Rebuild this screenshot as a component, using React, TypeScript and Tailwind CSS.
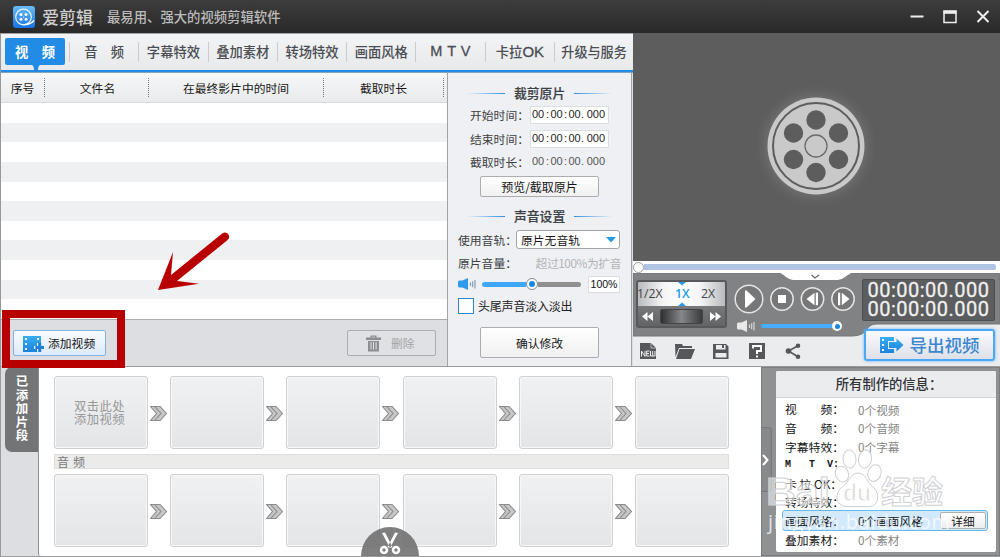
import React from "react";

const tabs: [string, string][] = [
  ["音　频", "text-[13.300px]"],
  ["字幕特效", "text-[13.300px]"],
  ["叠加素材", "text-[13.300px]"],
  ["转场特效", "text-[13.300px]"],
  ["画面风格", "text-[13.300px]"],
  ["M T V", "font-['Liberation_Sans',sans-serif] text-[14.500px] tracking-[0.500px] [-webkit-text-stroke:0.3px_#4a4d52]"],
  ["卡拉OK", "text-[13.300px]"],
  ["升级与服务", "text-[13.100px]"],
];

function FilmIcon({ arrow = false, className = "" }: { arrow?: boolean; className?: string }) {
  return (
    <svg viewBox="0 0 24 16" className={className}>
      <defs>
        <linearGradient id="film" x1="0" y1="0" x2="0" y2="1">
          <stop offset="0" stopColor="#39adf0" />
          <stop offset="1" stopColor="#1d83dd" />
        </linearGradient>
      </defs>
      {arrow ? (
        <>
          <path d="M0 0H14V4H8V12H14V16H0Z" fill="url(#film)" />
          <path d="M9 5H16.500V1.500L23.500 8L16.500 14.500V11H9Z" fill="url(#film)" />
          <path d="M2 2h2v2H2zM2 7h2v2H2zM2 12h2v2H2z" fill="#e8f4ff" />
        </>
      ) : (
        <>
          <path d="M0 0H18V7H14V10H11V13H14V16H0Z" fill="url(#film)" />
          <path d="M15.200 7H18.200V10H21V13H18.200V16H15.200V13H12.400V10H15.200Z" fill="#1d7fd8" />
          <path d="M2 2h2v2H2zM2 7h2v2H2zM2 12h2v2H2zM14 2h2v2h-2z" fill="#e8f4ff" />
        </>
      )}
    </svg>
  );
}

function Speaker({ white = false, className = "" }: { white?: boolean; className?: string }) {
  const c = white ? "#e8e8e8" : "#2f9bea";
  const w = white ? "#d8d8d8" : "#7f9fb5";
  return (
    <svg viewBox="0 0 18 12" className={className}>
      <path d="M0 4Q0 2.500 1.500 2.500H4.500L10 0V12L4.500 9.500H1.500Q0 9.500 0 8Z" fill={c} />
      <path d="M12.500 4.500V8M14.700 3.300V9.200M17 2V10.500" stroke={w} strokeWidth="1.200" fill="none" />
    </svg>
  );
}

function SectionTitle({ children }: { children: React.ReactNode }) {
  return (
    <div className="flex h-4 items-center justify-center gap-[9px]">
      <div className="h-px w-[38px] bg-linear-to-r from-transparent to-[#2f8fe4]" />
      <div className="w-[51px] whitespace-nowrap text-[12.800px] leading-4 font-medium text-[#3e4247] [-webkit-text-stroke:0.2px_#3e4247]">{children}</div>
      <div className="h-px w-[38px] bg-linear-to-l from-transparent to-[#2f8fe4]" />
    </div>
  );
}

function TimeValue() {
  return (
    <span className="flex font-['Liberation_Sans',sans-serif] text-[11px] leading-none">
      <span className="w-[13px]">00</span>
      <span className="w-[5px] text-center">:</span>
      <span className="w-[13px] text-center">00</span>
      <span className="w-[5px] text-center">:</span>
      <span className="w-[13px] text-center">00</span>
      <span className="w-[5px]">.</span>
      <span className="w-[19px] text-right">000</span>
    </span>
  );
}

function Chevron() {
  return (
    <svg viewBox="0 0 17 15" className="mt-[2px] mr-px h-[15px] w-[17px]">
      <path d="M.5.500H10L16.500 7.500L10 14.500H.5L6.500 7.500Z" fill="#c6c6c6" />
      <path d="M.5.500H10L16.500 7.500L10 14.500H.5L6.500 7.500ZM5 1L11 7.500L5 14" fill="none" stroke="#8b8b8b" strokeWidth="1.100" />
    </svg>
  );
}

function ClipRow({ first = false }: { first?: boolean }) {
  return (
    <div className="flex h-[73px]">
      {[0, 1, 2, 3, 4, 5].map((i) => (
        <React.Fragment key={i}>
          <div className="flex w-[94px] shrink-0 items-center justify-center rounded-[3px] border border-[#d0d0d1] bg-linear-to-b from-[#f0f1f2] to-[#e4e5e7] text-[12.300px] leading-[13px] tracking-[0.500px] text-[#979797] shadow-[inset_0_0_0_1px_#f8f8f8]">
            {first && i === 0 && <div className="-ml-[3px] whitespace-nowrap">双击此处<br />添加视频</div>}
          </div>
          {i < 5 && (
            <div className="flex w-[22.200px] shrink-0 items-center justify-center">
              <Chevron />
            </div>
          )}
        </React.Fragment>
      ))}
    </div>
  );
}

function TitleBar() {
  return (
    <header className="flex h-[33px] items-center bg-linear-to-b from-[#3d3d3d] to-[#292929]">
      <svg viewBox="0 0 22 22" className="ml-[13px] h-[22px] w-[22px]">
        <defs>
          <linearGradient id="logo" x1="0" y1="0" x2="0" y2="1">
            <stop offset="0" stopColor="#69bcf8" />
            <stop offset="1" stopColor="#1674e4" />
          </linearGradient>
        </defs>
        <rect width="22" height="22" rx="3" fill="url(#logo)" />
        <circle cx="10.500" cy="11" r="7.800" fill="none" stroke="#e8f5ff" strokeWidth="1.200" />
        <g fill="#fff">
          <circle cx="8" cy="8.500" r="1.500" />
          <circle cx="13" cy="8.500" r="1.500" />
          <circle cx="8" cy="13.300" r="1.500" />
          <circle cx="13" cy="13.300" r="1.500" />
          <circle cx="10.500" cy="11" r=".6" />
        </g>
        <path d="M10.500 18.700Q17 19 21 14.500" fill="none" stroke="#fff" strokeWidth="1.300" />
      </svg>
      <div className="ml-[7px] w-[65px] text-[17px] leading-none font-medium text-[#d0d0d0]">爱剪辑</div>
      <div className="w-[300px] text-[13.350px] leading-none font-medium text-[#bcbcbc]">最易用、强大的视频剪辑软件</div>
      <svg viewBox="0 0 90 20" className="ml-auto mr-1 h-5 w-[90px]" fill="none" stroke="#eee" strokeWidth="2">
        <path d="M4.500 9.500H17.500" />
        <path d="M38 4H50V15.500H38Z" strokeWidth="1.500" />
        <path d="M37.500 5.300H50.500" strokeWidth="3" />
        <path d="M71.500 4L82.500 15M82.500 4L71.500 15" />
      </svg>
    </header>
  );
}

function Tabs() {
  return (
    <nav className="flex h-[40px] shrink-0 flex-col border-t border-[#a0a2a4] bg-linear-to-b from-[#f3f4f6] to-[#e7e8ea]">
      <div className="flex h-[35px]">
        <div className="w-[68px] shrink-0 pl-1 pt-1">
          <div className="relative flex h-[27px] w-[60px] items-center justify-center rounded-[2px] bg-[#228be6] text-[13.300px] font-bold text-white">
            视　频
            <svg viewBox="0 0 8 5" className="absolute left-[26.500px] top-[27px] h-[5px] w-2"><path d="M0 0H8Q6 1 6 5H2Q2 1 0 0Z" fill="#228be6" /></svg>
          </div>
        </div>
        {tabs.map(([t, cls], i) => (
          <div key={t} className={"flex items-center whitespace-nowrap " + (i === 7 ? "flex-1" : "w-[69.300px] shrink-0")}>
            <div className="h-[20px] w-px bg-[#cacbcd]" />
            <div className={"flex-1 text-center font-medium text-[#4a4d52] " + cls}>
              {i === 6 ? <>卡拉<span className="font-['Liberation_Sans',sans-serif] text-[15px] [-webkit-text-stroke:0.3px_#4a4d52]">OK</span></> : t}
            </div>
          </div>
        ))}
      </div>
      <div className="mt-px h-[3px] border-b border-[#82a5c4] bg-[#228be6]" />
    </nav>
  );
}

function FileList() {
  return (
    <section className="flex w-[446px] shrink-0 flex-col">
      <div className="flex h-[30px] shrink-0 items-center border-b border-[#d9dadc] bg-linear-to-b from-[#f6f7f8] to-[#e9eaec] text-center text-[11.800px] text-[#171717]">
        <div className="w-[43px]">序号</div>
        <div className="h-[19px] border-l border-dotted border-[#777]" />
        <div className="w-[103px] pl-[2px]">文件名</div>
        <div className="h-[19px] border-l border-dotted border-[#777]" />
        <div className="w-[174px]">在最终影片中的时间</div>
        <div className="h-[19px] border-l border-dotted border-[#777]" />
        <div className="w-[119px]">截取时长</div>
        <div className="h-[19px] border-l border-dotted border-[#777]" />
      </div>
      <div className="flex min-h-0 flex-1 flex-col bg-white">
        {Array.from({ length: 11 }, (_, i) => (
          <div key={i} className={"flex-1 " + (i % 2 ? "bg-[#eff0f2]" : "bg-white")} />
        ))}
      </div>
      <div className="flex h-[47px] shrink-0 items-center justify-between border-t border-[#abacae] bg-[#dddee2] pl-3 pr-[11px]">
        <button className="flex h-[26px] w-[93px] items-center rounded-[2px] border border-[#82b3df] bg-linear-to-b from-[#f8fbff] to-[#ddeafa] pl-[9px] text-[11.800px] text-[#151515]">
          <FilmIcon className="mt-px h-4 w-6" />
          <span className="ml-px">添加视频</span>
        </button>
        <button className="flex h-[26px] w-[89px] items-center rounded-[2px] border border-[#abacae] bg-[#e0e1e4] pl-[18px] text-[11.800px] text-[#a3a4a6]">
          <svg viewBox="0 0 15 17" className="h-[17px] w-[15px]" fill="#8c8d8f">
            <path d="M0 2.500H4.500V.5H10.500V2.500H15V5H0ZM6 1.800V2.500H9V1.800ZM2 6H13V16.500H2ZM4.500 7V14.500H5.500V7ZM7 7V14.500H8V7ZM9.600 7V14.500H10.600V7Z" fillRule="evenodd" />
          </svg>
          <span className="ml-[10px]">删除</span>
        </button>
      </div>
    </section>
  );
}

const label = "w-[60px] shrink-0 whitespace-nowrap text-[11.800px] text-[#3d3f42]";

function Settings() {
  return (
    <section className="flex w-[185px] shrink-0 flex-col border-x border-[#a2a3a5] bg-[#eff0f3] pt-[12px] text-xs">
      <SectionTitle>裁剪原片</SectionTitle>
      <div className="mt-[4px] flex h-[19px] items-center pl-[22px]">
        <div className={label}>开始时间：</div>
        <div className="flex h-[18px] w-[79px] items-center border border-[#dcdde0] bg-white pl-px text-[#222]"><TimeValue /></div>
      </div>
      <div className="mt-[5px] flex h-[19px] items-center pl-[22px]">
        <div className={label}>结束时间：</div>
        <div className="flex h-[18px] w-[79px] items-center border border-[#dcdde0] bg-white pl-px text-[#222]"><TimeValue /></div>
      </div>
      <div className="mt-[4px] flex h-[19px] items-center pl-[22px]">
        <div className={label}>截取时长：</div>
        <div className="pl-[2px] text-[#555]"><TimeValue /></div>
      </div>
      <button className="mt-[5px] ml-[32px] h-[21px] w-[119px] rounded-[2px] border border-[#adadaf] bg-linear-to-b from-white to-[#f0f0f0] text-xs leading-[19px] text-[#151515]">预览/截取原片</button>
      <div className="mt-[11px]"><SectionTitle>声音设置</SectionTitle></div>
      <div className="mt-[6px] flex h-[19px] items-center pl-[10px]">
        <div className="w-[58px] shrink-0 whitespace-nowrap text-[11.800px] text-[#3d3f42]">使用音轨：</div>
        <div className="flex h-[19px] w-[104px] items-center justify-between rounded-[3px] border border-[#a3a4a6] bg-white pl-1 pr-[3px] text-[11.800px] text-[#151515]">
          原片无音轨
          <svg viewBox="0 0 10 6" className="h-[6px] w-[10px]"><path d="M0 0H10L5 5.500Z" fill="#229be9" /></svg>
        </div>
      </div>
      <div className="mt-[4px] flex h-[19px] items-center justify-between pl-[10px] pr-[10px]">
        <span className="text-[11.800px] text-[#3d3f42]">原片音量：</span>
        <span className="text-[11.800px] tracking-[-0.450px] text-[#b2b4b7]">超过100%为扩音</span>
      </div>
      <div className="mt-[3px] flex h-[18px] items-center pl-[10px]">
        <Speaker className="h-3 w-[18px]" />
        <div className="ml-[6px] flex w-[99px] items-center">
          <div className="h-[5px] w-[44px] rounded-l-full bg-[#3ea6fb]" />
          <div className="flex h-[12px] w-[12px] shrink-0 items-center justify-center rounded-full border border-[#888] bg-white"><div className="h-[6px] w-[6px] rounded-full bg-[#1687e2]" /></div>
          <div className="h-[5px] flex-1 rounded-r-full bg-[#909090]" />
        </div>
        <div className="ml-[7px] flex h-[17px] w-[32px] items-center justify-center border border-[#dcdde0] bg-white font-['Liberation_Sans',sans-serif] text-[10.500px] text-[#111]">100%</div>
      </div>
      <div className="mt-[5px] flex h-[16px] items-center pl-[10px] text-xs text-[#222]">
        <div className="h-[16px] w-[16px] border border-[#3487c4] bg-white" />
        <span className="ml-[4px] tracking-[-0.200px]">头尾声音淡入淡出</span>
      </div>
      <button className="mt-[13px] ml-[32px] h-[31px] w-[119px] rounded-[2px] border border-[#adadaf] bg-linear-to-b from-white to-[#f0f0f0] text-[11.800px] text-[#151515]">确认修改</button>
    </section>
  );
}

function Reel() {
  return (
    <svg viewBox="-70 -70 140 140" className="h-[140px] w-[140px]">
      <defs>
        <radialGradient id="glow">
          <stop offset=".65" stopColor="#999" stopOpacity=".6" />
          <stop offset="1" stopColor="#666" stopOpacity="0" />
        </radialGradient>
      </defs>
      <circle r="62" fill="url(#glow)" />
      <circle r="48.500" fill="#c9c9c9" />
      <circle r="43" fill="none" stroke="#5d5d5d" strokeWidth="2" />
      <circle r="11" fill="none" stroke="#6b6b6b" strokeWidth="1.300" />
      <g fill="#5d5d5d">
        <circle cy="-26" r="9.700" />
        <circle cy="26.500" r="9.700" />
        <circle cx="-22.500" cy="-13" r="9.700" />
        <circle cx="22.500" cy="-13" r="9.700" />
        <circle cx="-22.500" cy="13.500" r="9.700" />
        <circle cx="22.500" cy="13.500" r="9.700" />
      </g>
    </svg>
  );
}

function PlayButtons() {
  return (
    <svg viewBox="0 0 122 32" className="block h-[32px] w-[122px]">
      <g fill="#777" stroke="#e4e4e4" strokeWidth="1.500">
        <circle cx="15" cy="16" r="13.800" />
        <circle cx="48" cy="16" r="11.200" />
        <circle cx="78.500" cy="16" r="11.200" />
        <circle cx="109" cy="16" r="11.200" />
      </g>
      <g fill="#fff">
        <path d="M11 7.500H12.500L21.500 16L12.500 24.500H11Z" />
        <path d="M44 12H52V20H44Z" />
        <path d="M80.500 9.800V22.200L72.500 16ZM81.800 9.800H84V22.200H81.800ZM104 9.800H106.200V22.200H104ZM107.800 9.800L115.500 16L107.800 22.200Z" />
      </g>
    </svg>
  );
}

function ToolIcons() {
  return (
    <svg viewBox="0 0 162 18" className="block h-[18px] w-[162px]" fill="#55575a">
      <path d="M0 1H11L16 6V17H0Z" />
      <path d="M11 1V6H16" fill="none" stroke="#ddd" strokeWidth=".7" />
      <path d="M1.500 14.500V9L5 14.500V9M9.500 9H6.700V14H9.500M6.700 11.500H9M10.500 9V14H15V9M12.700 9V14" fill="none" stroke="#eee" strokeWidth="1" />
      <path d="M35 2H42L43 4H52V6H39L35.500 15Z" />
      <path d="M39.500 7H55L51 17H36Z" />
      <path d="M73 2H86L88.500 4.500V17H73ZM76 3V7.500H85.500V3ZM75.500 11V15.500H86.500V11ZM82 3H84V6H82Z" fillRule="evenodd" />
      <path d="M109 1H125V17H109Z" />
      <path d="M113 6.500V4H121V9H117V12" fill="none" stroke="#fff" strokeWidth="2" />
      <path d="M116 13.500h2v2h-2z" fill="#fff" />
      <circle cx="148.500" cy="9" r="2.800" />
      <circle cx="158" cy="3.800" r="2.300" />
      <circle cx="158" cy="14.700" r="2.300" />
      <path d="M158 3.800L148.500 9L158 14.700" fill="none" stroke="#55575a" strokeWidth="1.600" />
    </svg>
  );
}

function Player() {
  return (
    <section className="flex min-w-0 flex-1 flex-col bg-[#ebecee]">
      <div className="flex h-[228px] shrink-0 items-center justify-center bg-[#5d5d5d] pb-[2px] pr-px">
        <Reel />
      </div>
      <div className="flex h-[12px] shrink-0 items-center bg-white pr-1">
        <div className="h-[11px] w-[11px] rounded-full border border-[#999] bg-white" />
        <div className="h-[6px] flex-1 rounded-r-[2px] bg-[#afc3e5]" />
      </div>
      <div className="relative h-[93px]">
        <svg viewBox="0 0 367 64" className="absolute inset-0 h-16 w-[367px]">
          <path d="M0 0H367V51H244Q237 51 234 56Q230 63 219 63H0Z" fill="#818284" stroke="#737476" strokeWidth="1" />
          <path d="M144 -1H221Q217 0 212 4Q208 7 205 7H160Q157 7 153 4Q149 0 144 -1Z" fill="#fff" />
          <path d="M178.500 2L182 5L186 2" fill="none" stroke="#666" strokeWidth="1.200" />
        </svg>
        <div className="relative flex h-[62px]">
          <div className="ml-[3px] mt-[7px] h-[48px] w-[91px] shrink-0 overflow-hidden rounded-[3px] border-2 border-[#57595c] bg-[#6e7072]">
            <div className="relative flex h-[24px] items-center bg-[linear-gradient(to_right,#b9babd,#f4f4f6_28%,#fff_50%,#f4f4f6_72%,#b9babd)] font-['Open_Sans','Noto_Sans',sans-serif] text-[12.300px] text-[#444]">
              <span className="-ml-px w-[38px]">1/2X</span>
              <span className="w-[26px] font-semibold text-[#239be9]">1X</span>
              <span>2X</span>
              <svg viewBox="0 0 8 24" className="absolute left-[40px] top-0 h-6 w-2" fill="#239be9"><path d="M0 0H8L4 3.500ZM0 24H8L4 20.500Z" /></svg>
            </div>
            <div className="flex h-[20px] items-center justify-between bg-linear-to-b from-[#77797b] to-[#626466] px-1 pt-px">
              <svg viewBox="0 0 11 9" className="h-[9px] w-[11px]" fill="#fff"><path d="M5.500 0V9L0 4.500ZM11 0V9L5.500 4.500Z" /></svg>
              <div className="h-[15px] w-[43px] rounded-[2px] border border-[#444] bg-linear-to-r from-[#303133] via-[#86888b] to-[#3b3c3e]" />
              <svg viewBox="0 0 11 9" className="h-[9px] w-[11px]" fill="#fff"><path d="M0 0V9L5.500 4.500ZM5.500 0V9L11 4.500Z" /></svg>
            </div>
          </div>
          <div className="ml-[7px] w-[125px] shrink-0 pt-[10px]">
            <PlayButtons />
            <div className="mt-[4px] flex h-[14px] items-center pl-[3px]">
              <Speaker white className="h-[12px] w-[18px]" />
              <div className="ml-[6px] h-[4px] w-[71px] rounded-l-full bg-[#46adff]" />
              <div className="flex h-[10px] w-[10px] items-center justify-center rounded-full bg-white"><div className="h-[5px] w-[5px] rounded-full bg-[#1687e2]" /></div>
            </div>
          </div>
          <div className="ml-[3px] mt-[6px] flex h-[42px] w-[133px] flex-col items-center justify-center rounded-[2px] border border-[#4c4e4f] bg-[#5c5d5f] font-['Roboto','Liberation_Sans',sans-serif] text-[20px] leading-[19.500px] tracking-[0.500px] text-[#f0f0f0] [-webkit-text-stroke:0.3px_#f0f0f0]">
            <div>00:00:00.000</div>
            <div>00:00:00.000</div>
          </div>
        </div>
        <div className="relative flex items-center">
          <div className="ml-[7px] mt-[6px] w-[162px]"><ToolIcons /></div>
          <button className="-mt-[6px] ml-[62px] flex h-[32px] w-[131px] items-center justify-center gap-[6px] rounded-[3px] border-2 border-[#4aa8f6] bg-linear-to-b from-[#fafbff] to-[#dde0e8] text-[17.500px] font-medium text-[#3b86cf] shadow-[0_0_3px_#61b4ff]">
            <FilmIcon arrow className="h-4 w-6" />
            <span>导出视频</span>
          </button>
        </div>
      </div>
    </section>
  );
}

const info: [string, string][] = [
  ["视　　频：", "0个视频"],
  ["音　　频：", "0个音频"],
  ["字幕特效：", "0个字幕"],
  ["M   T  V:", ""],
  ["卡 拉 OK：", ""],
  ["转场特效：", ""],
  ["画面风格：", "0个画面风格"],
  ["叠加素材：", "0个素材"],
];

function Info() {
  return (
    <aside className="flex w-[239px] shrink-0 border border-[#7d7e80] bg-[#909193]">
      <div className="flex w-[14px] shrink-0 items-center pb-1">
        <div className="flex h-[65px] w-[10px] items-center rounded-r-[4px] border border-l-0 border-[#77787a] bg-[#88898b]">
          <svg viewBox="0 0 7 12" className="h-3 w-[7px]"><path d="M1 1L5.500 6L1 11" fill="none" stroke="#fff" strokeWidth="2" /></svg>
        </div>
      </div>
      <div className="mt-[3px] h-[181px] w-[220px] overflow-hidden rounded-[2px] bg-white">
        <div className="flex h-[27px] items-center justify-center border-b border-[#d4d5d7] bg-[#ebecee] pl-[6px] text-[13.300px] font-medium text-[#303236]">所有制作的信息：</div>
        <div className="pt-[2px]">
          {info.map(([a, b], i) => (
            <div key={a} className={"ml-[6px] flex w-[206px] items-center rounded-[3px] border text-xs " + (i === 6 ? "-my-[1.250px] h-[21px] border-[#65b9e8] bg-[#d3eafd]" : "h-[18.600px] border-transparent")}>
              <span className={"w-[75px] whitespace-pre pl-[2px] text-[#151515] " + (i === 3 ? "font-['Liberation_Mono',monospace] text-[10px] font-bold" : "text-[11.800px]")}>{a}</span>
              <span className={"whitespace-nowrap text-[11.700px] " + (i === 6 ? "text-[#151515]" : "text-[#858585]")}>{b}</span>
              {i === 6 && <button className="ml-auto mr-px h-[17px] w-[46px] rounded-[2px] border border-[#b0b1b3] bg-linear-to-b from-white to-[#ededed] text-[11.700px] leading-[15px] text-[#151515]">详细</button>}
            </div>
          ))}
        </div>
      </div>
    </aside>
  );
}

function Watermark() {
  return (
    <div className="pointer-events-none absolute left-[766px] top-[446px] h-[92px] w-[190px]">
      <svg viewBox="0 0 190 92" className="h-[92px] w-[190px]" fill="#fff" fillOpacity=".55" stroke="#cfd0d2" strokeWidth="1">
        <ellipse cx="76" cy="28" rx="6.500" ry="8" transform="rotate(-20 76 28)" />
        <ellipse cx="83.500" cy="13" rx="6.500" ry="9" transform="rotate(-5 83.500 13)" />
        <ellipse cx="99" cy="13" rx="6.500" ry="9" transform="rotate(8 99 13)" />
        <ellipse cx="108.500" cy="27" rx="6.500" ry="8.500" transform="rotate(20 108.500 27)" />
        <path d="M92 27C84 27 83 37 76 41C68 47 70 60 80 60.500H103C113 60 114 48 108 42C101 37 100 27 92 27Z" />
        <g fontFamily="Liberation Sans, sans-serif" fontWeight="700">
          <text x="0" y="59" fontSize="39" textLength="64" lengthAdjust="spacingAndGlyphs">Bai</text>
          <text x="77" y="55" fontSize="23" fill="#d4d5d6" fillOpacity=".8" stroke="#fff">du</text>
          <text x="115" y="57" fontFamily="Noto Sans CJK SC, sans-serif" fontSize="31" fillOpacity=".8" textLength="62">经验</text>
          <text x="2" y="83" fontFamily="Open Sans, sans-serif" fontWeight="400" fontSize="20" fillOpacity=".75" textLength="182" stroke="none">jingyan.baidu.com</text>
        </g>
      </svg>
    </div>
  );
}

export default function App() {
  return (
    <div className="relative h-[557px] w-[1000px] overflow-hidden bg-[#dddee2] font-['Noto_Sans_CJK_SC',sans-serif] text-xs">
      <TitleBar />
      <div className="flex h-[333px]">
        <div className="flex w-[633px] shrink-0 flex-col border-l border-[#96989a]">
          <Tabs />
          <div className="flex min-h-0 flex-1">
            <FileList />
            <Settings />
          </div>
        </div>
        <Player />
      </div>
      <div className="flex h-[191px] border-b border-l border-t border-[#999a9c]">
        <div className="w-[37px] shrink-0 bg-[#dddee2] pl-1">
          <div className="flex h-[85px] w-[34px] flex-col items-center rounded-l-[7px] bg-[#737476] pt-[7px] text-[12.500px] leading-[13.500px] font-bold text-white">
            {[..."已添加片段"].map((c) => <span key={c}>{c}</span>)}
          </div>
        </div>
        <main className="relative min-w-0 flex-1 rounded-bl-[3px] border-l border-[#8d8e90] bg-white pl-[15px] pt-[9px]">
          <ClipRow first />
          <div className="mt-[5px] flex h-[15px] w-[675px] items-center border border-[#dcdddd] bg-[#ebebea] pl-[2px] text-xs tracking-[0.700px] text-[#77797b]">音 频</div>
          <div className="mt-[5px]"><ClipRow /></div>
          <div className="absolute bottom-0 left-[322px] flex h-[29px] w-[58px] justify-center rounded-t-full bg-[#6b6b6bdd] pt-[5px]">
            <svg viewBox="0 0 22 23" className="h-[23px] w-[22px]">
              <path d="M3 1L6 .5L13.500 15L11 16ZM19 1L16 .5L8.500 15L11 16Z" fill="#fff" />
              <circle cx="5" cy="18" r="3" fill="none" stroke="#fff" strokeWidth="2.500" />
              <circle cx="17" cy="18" r="3" fill="none" stroke="#fff" strokeWidth="2.500" />
            </svg>
          </div>
        </main>
        <Info />
      </div>
      <Watermark />
      <div className="pointer-events-none absolute left-[2px] top-[310px] h-[58px] w-[123px] border-8 border-[#b90000]" />
      <svg viewBox="0 0 76 62" className="pointer-events-none absolute left-[156px] top-[230px] h-[62px] w-[76px]" fill="#b90000">
        <path d="M2 60L17 22L15 45L66.500 3.200Q71 1 73 5.500Q74 8 71 10.500L21 51L43 53.700Z" />
      </svg>
    </div>
  );
}
